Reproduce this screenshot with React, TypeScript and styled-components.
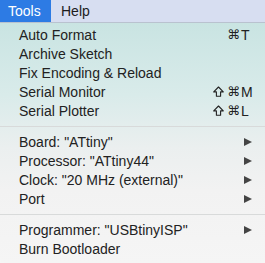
import React from "react";
import styled, { createGlobalStyle } from "styled-components";

const GlobalStyle = createGlobalStyle`
  html, body {
    margin: 0;
    padding: 0;
    background: #f6f6f6;
  }
  body {
    font-family: "Liberation Sans", Arial, sans-serif;
  }
`;

const Screen = styled.div`
  width: 265px;
  height: 263px;
  overflow: hidden;
  display: flex;
  flex-direction: column;
`;

const MenuBar = styled.div`
  height: 22px;
  display: flex;
  align-items: stretch;
  background: #d7def1;
  border-bottom: 1px solid #b9c2cf;
`;

const BarItem = styled.div<{ $active?: boolean }>`
  display: flex;
  align-items: center;
  box-sizing: border-box;
  width: ${({ $active }) => ($active ? "51px" : "auto")};
  padding-left: ${({ $active }) => ($active ? "8px" : "10px")};
  font-size: 14px;
  color: ${({ $active }) => ($active ? "#ffffff" : "#1c1c1c")};
  background: ${({ $active }) => ($active ? "#2d7be4" : "transparent")};
`;

const Dropdown = styled.div`
  flex: 1;
  padding-top: 2px;
  background: linear-gradient(180deg, #c9e4e2 0%, #d9ebea 30%, #ebefef 52%, #f2f2f2 70%, #f5f5f5 100%);
  border-radius: 0 0 5px 5px;
`;

const Row = styled.div`
  height: 19px;
  display: flex;
  align-items: center;
  padding: 0 12px 0 19px;
  font-size: 14px;
  color: #222;
`;

const Label = styled.span`
  flex: 1;
  white-space: nowrap;
`;

const Shortcut = styled.span`
  display: flex;
  align-items: center;
  margin-right: -1px;
  color: #222;
`;

const ShiftIcon = styled.svg`
  width: 11px;
  height: 11px;
  margin-right: 3px;
`;

const Cmd = styled.span`
  font-family: "DejaVu Sans", sans-serif;
  font-size: 13px;
  margin-right: 1px;
`;

const Key = styled.span`
  width: 13px;
  font-size: 14px;
`;

const Arrow = styled.span`
  width: 0;
  height: 0;
  margin-right: 1px;
  border-top: 4.5px solid transparent;
  border-bottom: 4.5px solid transparent;
  border-left: 8px solid #444;
`;

const Separator = styled.div`
  height: 12px;
  display: flex;
  align-items: center;

  &::after {
    content: "";
    flex: 1;
    height: 1px;
    background: #d8dada;
  }
`;

type Item =
  | { kind: "item"; label: string; shift?: boolean; keyChar?: string; submenu?: boolean }
  | { kind: "sep" };

const items: Item[] = [
  { kind: "item", label: "Auto Format", keyChar: "T" },
  { kind: "item", label: "Archive Sketch" },
  { kind: "item", label: "Fix Encoding & Reload" },
  { kind: "item", label: "Serial Monitor", shift: true, keyChar: "M" },
  { kind: "item", label: "Serial Plotter", shift: true, keyChar: "L" },
  { kind: "sep" },
  { kind: "item", label: 'Board: "ATtiny"', submenu: true },
  { kind: "item", label: 'Processor: "ATtiny44"', submenu: true },
  { kind: "item", label: 'Clock: "20 MHz (external)"', submenu: true },
  { kind: "item", label: "Port", submenu: true },
  { kind: "sep" },
  { kind: "item", label: 'Programmer: "USBtinyISP"', submenu: true },
  { kind: "item", label: "Burn Bootloader" },
];

const App: React.FC = () => {
  return (
    <Screen>
      <GlobalStyle />
      <MenuBar>
        <BarItem $active>Tools</BarItem>
        <BarItem>Help</BarItem>
      </MenuBar>
      <Dropdown>
        {items.map((item, i) =>
          item.kind === "sep" ? (
            <Separator key={i} />
          ) : (
            <Row key={i}>
              <Label>{item.label}</Label>
              {item.keyChar && (
                <Shortcut>
                  {item.shift && (
                    <ShiftIcon viewBox="0 0 11 11">
                      <path
                        d="M5.5 1 L10.3 5.9 H7.6 V10.2 H3.4 V5.9 H0.7 Z"
                        fill="none"
                        stroke="#222"
                        strokeWidth="1.1"
                        strokeLinejoin="round"
                      />
                    </ShiftIcon>
                  )}
                  <Cmd>{"\u2318"}</Cmd>
                  <Key>{item.keyChar}</Key>
                </Shortcut>
              )}
              {item.submenu && <Arrow />}
            </Row>
          )
        )}
      </Dropdown>
    </Screen>
  );
};

export default App;
